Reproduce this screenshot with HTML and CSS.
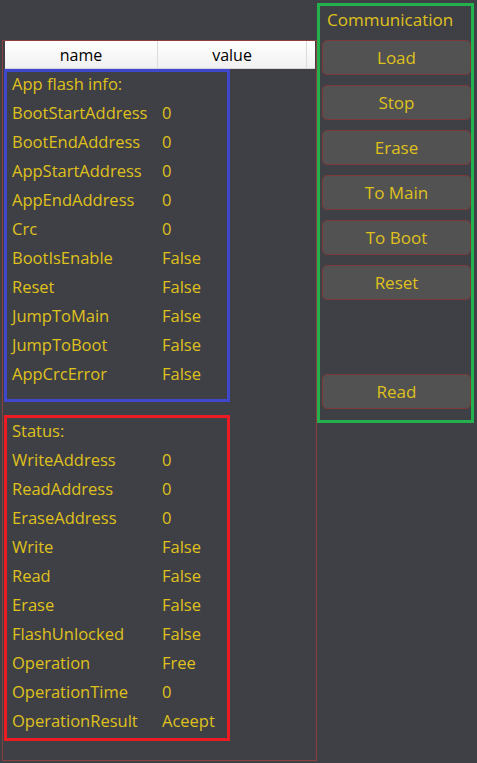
FILE: index.html
```html
<!DOCTYPE html>
<html>
<head>
<meta charset="utf-8">
<link rel="stylesheet" href="styles.css">
</head>
<body>
<div class="app">
  <div class="left">
    <div class="grid-head">
      <div class="hc name">name</div>
      <div class="hc value">value</div>
      <div class="hc fill"></div>
    </div>
    <div class="box blue">
      <div class="row">App flash info:</div>
      <div class="row"><span class="k">BootStartAddress</span><span class="v">0</span></div>
      <div class="row"><span class="k">BootEndAddress</span><span class="v">0</span></div>
      <div class="row"><span class="k">AppStartAddress</span><span class="v">0</span></div>
      <div class="row"><span class="k">AppEndAddress</span><span class="v">0</span></div>
      <div class="row"><span class="k">Crc</span><span class="v">0</span></div>
      <div class="row"><span class="k">BootIsEnable</span><span class="v">False</span></div>
      <div class="row"><span class="k">Reset</span><span class="v">False</span></div>
      <div class="row"><span class="k">JumpToMain</span><span class="v">False</span></div>
      <div class="row"><span class="k">JumpToBoot</span><span class="v">False</span></div>
      <div class="row"><span class="k">AppCrcError</span><span class="v">False</span></div>
    </div>
    <div class="box red">
      <div class="row">Status:</div>
      <div class="row"><span class="k">WriteAddress</span><span class="v">0</span></div>
      <div class="row"><span class="k">ReadAddress</span><span class="v">0</span></div>
      <div class="row"><span class="k">EraseAddress</span><span class="v">0</span></div>
      <div class="row"><span class="k">Write</span><span class="v">False</span></div>
      <div class="row"><span class="k">Read</span><span class="v">False</span></div>
      <div class="row"><span class="k">Erase</span><span class="v">False</span></div>
      <div class="row"><span class="k">FlashUnlocked</span><span class="v">False</span></div>
      <div class="row"><span class="k">Operation</span><span class="v">Free</span></div>
      <div class="row"><span class="k">OperationTime</span><span class="v">0</span></div>
      <div class="row"><span class="k">OperationResult</span><span class="v">Aceept</span></div>
    </div>
  </div>
  <div class="comm">
    <div class="comm-title">Communication</div>
    <div class="btns">
      <button class="btn">Load</button>
      <button class="btn">Stop</button>
      <button class="btn">Erase</button>
      <button class="btn">To Main</button>
      <button class="btn">To Boot</button>
      <button class="btn">Reset</button>
      <button class="btn read">Read</button>
    </div>
  </div>
</div>
</body>
</html>
```
FILE: styles.css
```css
html, body {
  margin: 0;
  padding: 0;
}
body {
  background: #3f4046;
  font-family: "Open Sans", "Noto Sans", sans-serif;
  color: #dfc11c;
}
.app {
  display: flex;
  align-items: flex-start;
  width: 477px;
  height: 763px;
  overflow: hidden;
}
.left {
  box-sizing: border-box;
  width: 315px;
  height: 721px;
  margin: 40px 0 0 2px;
  border: 1px solid #8a3e3e;
  padding-left: 1px;
}
.grid-head {
  display: flex;
  width: 310px;
  height: 28px;
  margin-left: 1px;
  box-sizing: border-box;
  border-bottom: 1px solid #d4d4d4;
  background: linear-gradient(#ffffff, #f1f1f1);
}
.hc {
  box-sizing: border-box;
  height: 27px;
  padding-top: 2px;
  line-height: 25px;
  font-size: 16px;
  color: #000;
  text-align: center;
}
.hc.name {
  width: 152px;
}
.hc.value {
  width: 150px;
  border-left: 1px solid #dcdcdc;
  border-right: 1px solid #dcdcdc;
}
.hc.fill {
  flex: 1;
}
.box {
  box-sizing: border-box;
  width: 226px;
  border: 3px solid;
  padding-left: 5px;
}
.blue {
  height: 333px;
  border-color: #3f48cc;
}
.red {
  height: 326px;
  margin-top: 13px;
  border-color: #ed1c24;
  padding-top: 1px;
}
.row {
  display: flex;
  height: 29px;
  line-height: 23px;
  font-size: 16.5px;
  white-space: nowrap;
}
.k {
  width: 150px;
}
.comm {
  box-sizing: border-box;
  width: 157px;
  height: 420px;
  margin-top: 3px;
  border: 3px solid #22b14c;
}
.comm-title {
  box-sizing: border-box;
  height: 34px;
  padding: 4px 0 0 7px;
  line-height: 20px;
  font-size: 17px;
}
.btns {
  display: flex;
  flex-direction: column;
  gap: 10px;
  padding-left: 2px;
}
.btn {
  box-sizing: border-box;
  width: 149px;
  height: 35px;
  margin: 0;
  padding: 0;
  border: 1px solid #7a3a3a;
  border-radius: 5px;
  background: #525252;
  color: #dfc11c;
  font-family: "Open Sans", "Noto Sans", sans-serif;
  font-size: 17px;
  text-align: center;
}
.btn.read {
  margin-top: 64px;
}
```
